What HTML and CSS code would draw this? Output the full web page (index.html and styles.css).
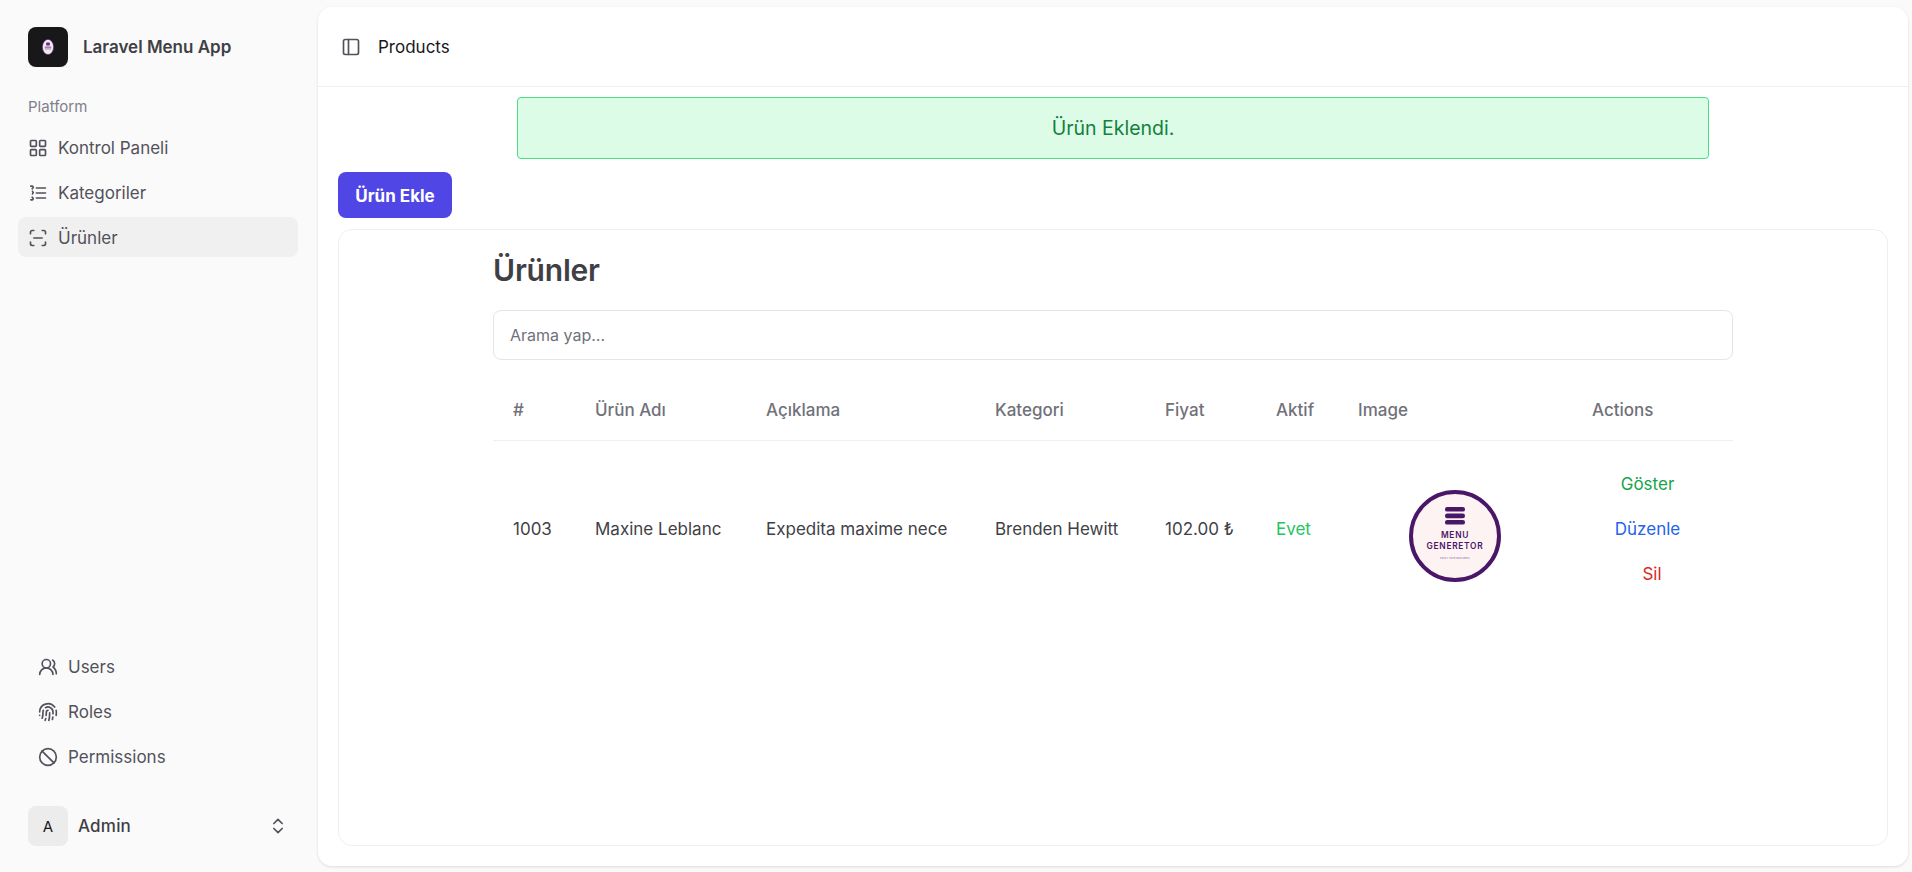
FILE: index.html
```html
<!DOCTYPE html>
<html lang="tr">
<head>
<meta charset="utf-8">
<title>Products</title>
<link rel="stylesheet" href="styles.css">
</head>
<body>
<aside class="sidebar">
  <div class="brand">
    <span class="brand-logo">
      <svg class="brand-mark" viewBox="0 0 12 16"><ellipse cx="6" cy="8" rx="5.6" ry="7.6" fill="#f5e6f2" stroke="#5b2a78" stroke-width=".6"/><rect x="4.2" y="3.4" width="3.6" height="3.2" rx=".6" fill="#5b2a78"/><rect x="2.8" y="7.6" width="6.4" height="1.1" fill="#7d5a93"/><rect x="2.8" y="9.4" width="6.4" height="1.1" fill="#a68bb6"/></svg>
    </span>
    <span class="brand-name">Laravel Menu App</span>
  </div>
  <div class="nav-heading">Platform</div>
  <nav class="nav nav-top">
    <a class="nav-item">
      <svg class="icon" viewBox="0 0 24 24"><rect x="3" y="3" width="7" height="7" rx="1"/><rect x="14" y="3" width="7" height="7" rx="1"/><rect x="14" y="14" width="7" height="7" rx="1"/><rect x="3" y="14" width="7" height="7" rx="1"/></svg>
      Kontrol Paneli
    </a>
    <a class="nav-item">
      <svg class="icon" viewBox="0 0 24 24"><path d="M10 6h11M10 12h11M10 18h11M3.4 3.8h1.4a1.4 1.4 0 0 1 1 2.4l-.8.7M5.4 10l.8 1.6-.8 1.6M3.4 20.2h1.4a1.4 1.4 0 0 0 1-2.4l-.8-.7"/></svg>
      Kategoriler
    </a>
    <a class="nav-item nav-item-active">
      <svg class="icon" viewBox="0 0 24 24"><path d="M3 7V5a2 2 0 0 1 2-2h2M17 3h2a2 2 0 0 1 2 2v2M21 17v2a2 2 0 0 1-2 2h-2M7 21H5a2 2 0 0 1-2-2v-2M7 12h10"/></svg>
      Ürünler
    </a>
  </nav>
  <nav class="nav nav-bottom">
    <a class="nav-item">
      <svg class="icon" viewBox="0 0 24 24"><path d="M18 21a8 8 0 0 0-16 0"/><circle cx="10" cy="8" r="5"/><path d="M22 20c0-3.37-2-6.5-4-8a5 5 0 0 0-.45-8.3"/></svg>
      Users
    </a>
    <a class="nav-item">
      <svg class="icon" viewBox="0 0 24 24"><path d="M12 10a2 2 0 0 0-2 2c0 1.02-.1 2.51-.26 4M14 13.12c0 2.38 0 6.38-1 8.88M17.29 21.02c.12-.6.43-2.3.5-3.02M2 12a10 10 0 0 1 18-6M2 16h.01M21.8 16c.2-2 .131-5.354 0-6M5 19.5C5.5 18 6 15 6 12a6 6 0 0 1 .34-2M8.65 22c.21-.66.45-1.32.57-2M9 6.8a6 6 0 0 1 9 5.2v2"/></svg>
      Roles
    </a>
    <a class="nav-item">
      <svg class="icon" viewBox="0 0 24 24"><circle cx="12" cy="12" r="10"/><path d="m4.9 4.9 14.2 14.2"/></svg>
      Permissions
    </a>
  </nav>
  <div class="user">
    <span class="avatar">A</span>
    <span class="user-name">Admin</span>
    <svg class="icon" viewBox="0 0 24 24"><path d="m7 15 5 5 5-5M7 9l5-5 5 5"/></svg>
  </div>
</aside>

<main class="main">
  <header class="topbar">
    <svg class="icon" viewBox="0 0 24 24"><rect x="3" y="3" width="18" height="18" rx="2"/><path d="M9 3v18"/></svg>
    <span class="topbar-title">Products</span>
  </header>
  <div class="content">
    <div class="alert">Ürün Eklendi.</div>
    <button class="add-button" type="button">Ürün Ekle</button>
    <section class="card">
      <div class="card-inner">
        <h1 class="title">Ürünler</h1>
        <input class="search" type="text" placeholder="Arama yap...">
        <table class="table">
          <thead>
            <tr>
              <th class="col-id">#</th>
              <th class="col-name">Ürün Adı</th>
              <th class="col-desc">Açıklama</th>
              <th class="col-cat">Kategori</th>
              <th class="col-price">Fiyat</th>
              <th class="col-active">Aktif</th>
              <th class="col-image">Image</th>
              <th class="col-actions">Actions</th>
            </tr>
          </thead>
          <tbody>
            <tr>
              <td>1003</td>
              <td>Maxine Leblanc</td>
              <td>Expedita maxime nece</td>
              <td>Brenden Hewitt</td>
              <td>102.00 ₺</td>
              <td class="yes">Evet</td>
              <td class="image-cell">
                <svg class="product-logo" viewBox="0 0 92 92">
                  <circle cx="46" cy="46" r="44" fill="#fdf3f3" stroke="#4a1766" stroke-width="4"/>
                  <rect x="36" y="17" width="20" height="4.6" rx="2.2" fill="#4a1766"/>
                  <rect x="36" y="23.6" width="20" height="4.6" rx="2.2" fill="#4a1766"/>
                  <rect x="36" y="30" width="20" height="4.6" rx="2.2" fill="#4a1766"/>
                  <text class="logo-text" x="46" y="48" text-anchor="middle">MENU</text>
                  <text class="logo-text" x="46" y="59" text-anchor="middle">GENERETOR</text>
                  <text class="logo-tag" x="46" y="69" text-anchor="middle">CRAFT YOUR OWN MENU</text>
                </svg>
              </td>
              <td class="actions">
                <a class="action action-show">Göster</a>
                <a class="action action-edit">Düzenle</a>
                <a class="action action-delete">Sil</a>
              </td>
            </tr>
          </tbody>
        </table>
      </div>
    </section>
  </div>
</main>
</body>
</html>
```

FILE: styles.css
```css
* { box-sizing: border-box; }

html, body { height: 100%; }

body {
  margin: 0;
  display: flex;
  height: 100vh;
  overflow: hidden;
  background: #fafafa;
  color: #3f3f46;
  font-family: Inter, "Liberation Sans", sans-serif;
  font-size: 17px;
}

.icon {
  width: 20px;
  height: 20px;
  flex: none;
  fill: none;
  stroke: #52525b;
  stroke-width: 2;
  stroke-linecap: round;
  stroke-linejoin: round;
}

/* Sidebar */
.sidebar {
  width: 318px;
  flex: none;
  display: flex;
  flex-direction: column;
  padding: 27px 20px 26px 18px;
}

.brand {
  display: flex;
  align-items: center;
  gap: 15px;
  padding-left: 10px;
  height: 40px;
}

.brand-logo {
  width: 40px;
  height: 40px;
  border-radius: 8px;
  background: #18181b;
  display: flex;
  align-items: center;
  justify-content: center;
}

.brand-mark { width: 12px; height: 16px; }

.brand-name { font-weight: 600; color: #3f3f46; }

.nav-heading {
  margin-top: 30px;
  padding-left: 10px;
  font-size: 15px;
  line-height: 20px;
  color: #80808a;
}

.nav {
  display: flex;
  flex-direction: column;
  gap: 5px;
  margin-top: 10px;
}

.nav-top .nav-item { padding-top: 2px; }

.nav-bottom {
  margin-top: auto;
  padding-left: 10px;
}

.nav-item {
  display: flex;
  align-items: center;
  gap: 10px;
  height: 40px;
  padding: 0 10px;
  border-radius: 8px;
  color: #52525b;
}

.nav-item-active { background: #f0f0f0; }

.user {
  display: flex;
  align-items: center;
  margin-top: 29px;
  padding: 0 10px;
  height: 40px;
}

.avatar {
  width: 40px;
  height: 40px;
  border-radius: 8px;
  background: #ececec;
  display: flex;
  align-items: center;
  justify-content: center;
  color: #18181b;
  font-size: 15px;
}

.user-name {
  flex: 1;
  margin-left: 10px;
  font-weight: 500;
  letter-spacing: .2px;
  color: #3f3f46;
}

/* Main panel */
.main {
  flex: 1;
  min-width: 0;
  margin: 7px 4px 6px 0;
  background: #fff;
  border-radius: 14px;
  box-shadow: 0 1px 3px rgba(0, 0, 0, .12);
  display: flex;
  flex-direction: column;
}

.topbar {
  height: 80px;
  flex: none;
  display: flex;
  align-items: center;
  gap: 17px;
  padding: 0 22px 0 23px;
  border-bottom: 1px solid #efefef;
}

.topbar-title { color: #18181b; }

.content {
  flex: 1;
  min-height: 0;
  display: flex;
  flex-direction: column;
  padding: 10px 20px 20px;
}

.alert {
  width: 1192px;
  height: 62px;
  flex: none;
  margin-left: 179px;
  display: flex;
  align-items: center;
  justify-content: center;
  background: #dcfce7;
  border: 1px solid #4ade80;
  border-radius: 4px;
  color: #15803d;
  font-size: 19.5px;
}

.add-button {
  align-self: flex-start;
  width: 114px;
  height: 46px;
  flex: none;
  margin-top: 13px;
  padding: 2px 0 0;
  border: 0;
  border-radius: 8px;
  background: #4f46e5;
  color: #fff;
  font: inherit;
  font-weight: 700;
}

.card {
  flex: 1;
  min-height: 0;
  margin-top: 11px;
  border: 1px solid #efefef;
  border-radius: 14px;
}

.card-inner {
  width: 1240px;
  margin-left: 154px;
  padding-top: 20px;
}

.title {
  margin: 0;
  font-size: 30px;
  line-height: 40px;
  font-weight: 600;
  letter-spacing: -0.2px;
  color: #3f3f46;
}

.search {
  display: block;
  width: 100%;
  height: 50px;
  margin-top: 20px;
  padding: 0 16px;
  border: 1px solid #e5e5e5;
  border-radius: 8px;
  background: #fff;
  color: #3f3f46;
  font: inherit;
  font-size: 16px;
}

.search::placeholder { color: #71717a; opacity: 1; }

.table {
  width: 100%;
  margin-top: 20px;
  border-collapse: collapse;
  table-layout: fixed;
}

.table th {
  height: 60px;
  padding: 0 20px;
  border-bottom: 1px solid #efefef;
  text-align: left;
  font-weight: 500;
  color: #71717a;
}

.table td {
  padding: 0 20px;
  vertical-align: middle;
  color: #3f3f46;
}

.col-id { width: 82px; }
.col-name { width: 171px; }
.col-desc { width: 229px; }
.col-cat { width: 170px; }
.col-price { width: 111px; }
.col-active { width: 82px; }
.col-image { width: 234px; }
.col-actions { width: 161px; }

.table .yes { color: #22c55e; }

.table .image-cell {
  padding: 15px 0 0;
  text-align: center;
}

.product-logo {
  display: block;
  width: 92px;
  height: 92px;
  margin: 0 auto;
}

.logo-text {
  fill: #4a1766;
  font-family: Inter, sans-serif;
  font-size: 8.4px;
  font-weight: 600;
  letter-spacing: .7px;
}

.logo-tag {
  fill: #8a6a9e;
  font-family: Inter, sans-serif;
  font-size: 2.4px;
}

.action {
  display: block;
  height: 45px;
  line-height: 45px;
  text-align: center;
}

.action-show { color: #16a34a; }
.action-edit { color: #2563eb; }
.action-delete { color: #dc2626; padding-left: 9px; }

.table .actions { padding: 2px 10px 0 0; }
.table tbody td { height: 177px; }
```
